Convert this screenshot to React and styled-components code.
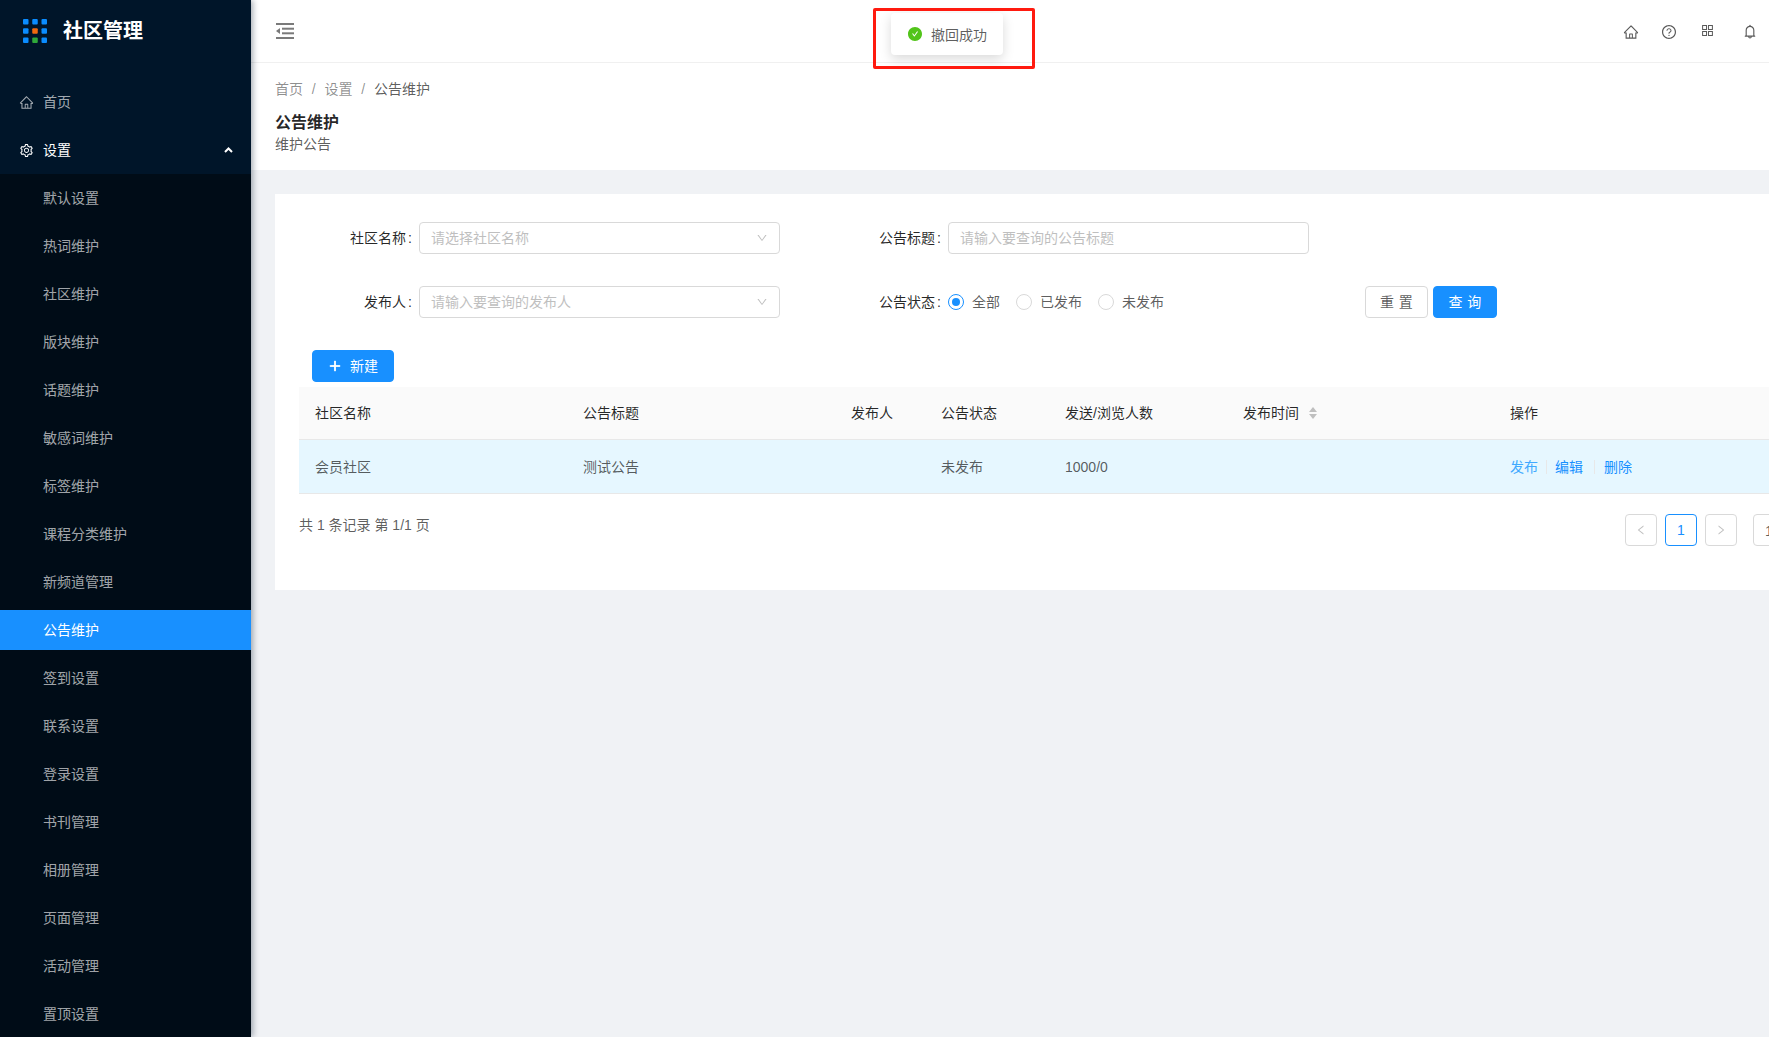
import React from 'react';
import styled, { createGlobalStyle } from 'styled-components';
import {
  AiOutlineHome,
  AiOutlineSetting,
  AiOutlineQuestionCircle,
  AiOutlineAppstore,
  AiOutlineBell,
  AiFillCheckCircle,
  AiOutlinePlus,
  AiOutlineDown,
  AiOutlineLeft,
  AiOutlineRight,
} from 'react-icons/ai';

const GlobalStyle = createGlobalStyle`
html, body {
  margin: 0;
  height: 100%;
  overflow: hidden;
  background: #f0f2f5;
  font-family: "Liberation Sans", "Noto Sans CJK SC", sans-serif;
  font-size: 14px;
  color: rgba(0, 0, 0, 0.65);
}
* {
  box-sizing: border-box;
}
`

const Layout = styled.div`
display: flex;
width: 1769px;
height: 1037px;
overflow: hidden;
position: relative;
`

const Sidebar = styled.aside`
flex: 0 0 251px;
height: 100%;
background-color: #001529;
box-shadow: 2px 0 6px rgba(0, 21, 41, 0.35);
overflow: hidden;
position: relative;
z-index: 2;
`

const Logo = styled.div`
height: 62px;
margin-bottom: 16px;
display: flex;
align-items: center;
padding-left: 23px;
`

const LogoTitle = styled.h1`
margin: 0 0 0 16px;
font-size: 20px;
line-height: 28px;
font-weight: 700;
color: #fff;
`

const Menu = styled.div`
display: flex;
flex-direction: column;
gap: 8px;
padding: 4px 0;
`

const MenuTitle = styled.div`
height: 40px;
display: flex;
align-items: center;
gap: 9px;
padding: 0 18px 0 19px;
line-height: 22px;
color: ${(props) => (props.$open ? '#fff' : 'rgba(255, 255, 255, 0.65)')};
svg {
  font-size: 15px;
}
`

const Arrow = styled.svg`
margin-left: auto;
width: 9px;
height: 6px;
`

const SubMenu = styled.div`
display: flex;
flex-direction: column;
gap: 8px;
padding: 4px 0;
background-color: #000c17;
`

const SubItem = styled.div`
height: 40px;
display: flex;
align-items: center;
padding-left: 43px;
line-height: 22px;
color: ${(props) => (props.$active ? '#fff' : 'rgba(255, 255, 255, 0.65)')};
background-color: ${(props) => (props.$active ? '#1890ff' : 'transparent')};
`

const Content = styled.div`
flex: 1;
min-width: 0;
display: flex;
flex-direction: column;
`

const TopBar = styled.header`
flex: 0 0 63px;
height: 63px;
display: flex;
align-items: center;
padding: 0 11px 0 25px;
background-color: #fff;
border-bottom: 1px solid #f0f0f0;
`

const FoldIcon = styled.svg`
width: 18px;
height: 16px;
margin-top: -1px;
`

const TopIcons = styled.div`
margin-left: auto;
display: flex;
align-items: center;
`

const TopIcon = styled.span`
width: 38px;
height: 20px;
display: flex;
align-items: center;
justify-content: center;
color: #595959;
font-size: ${(props) => props.$size || 16}px;
transform: translateY(${(props) => props.$shift || 0}px);
&:last-child {
  width: 16px;
  margin-left: 16px;
}
`

const PageHead = styled.div`
height: 107px;
padding: 15px 24px 0;
background-color: #fff;
`

const Breadcrumb = styled.div`
display: flex;
line-height: 22px;
color: rgba(0, 0, 0, 0.45);
`

const Slash = styled.span`
margin: 0 8.8px;
`

const Current = styled.span`
color: rgba(0, 0, 0, 0.65);
`

const PageTitle = styled.h2`
margin: 11px 0 0;
font-size: 16px;
line-height: 24px;
font-weight: 600;
color: rgba(0, 0, 0, 0.85);
`

const PageDesc = styled.p`
margin: -2px 0 0;
line-height: 22px;
`

const Card = styled.section`
width: 1600px;
margin: 24px 0 0 24px;
padding: 28px 24px 44px;
background-color: #fff;
`

const FormRow = styled.div`
display: flex;
align-items: center;
height: 32px;
margin: 0 0 32px -24px;
`

const Label = styled.label`
width: ${(props) => props.$width}px;
padding-right: 7px;
text-align: right;
color: rgba(0, 0, 0, 0.85);
line-height: 22px;
&::after {
  content: ':';
  margin-left: 2px;
}
`

const Field = styled.div`
width: 361px;
height: 32px;
display: flex;
align-items: center;
padding: 0 11px 2px;
border: 1px solid #d9d9d9;
border-radius: 4px;
color: #bfbfbf;
svg {
  margin: 2px 0 0 auto;
  font-size: 12px;
  color: #bfbfbf;
}
`

const RadioGroup = styled.div`
width: 361px;
display: flex;
align-items: center;
`

const RadioItem = styled.span`
display: flex;
align-items: center;
margin-right: 16px;
line-height: 22px;
`

const RadioDot = styled.span`
width: 16px;
height: 16px;
margin-right: 8px;
border-radius: 50%;
border: 1px solid ${(props) => (props.$checked ? '#1890ff' : '#d9d9d9')};
display: flex;
align-items: center;
justify-content: center;
&::after {
  content: '';
  width: 8px;
  height: 8px;
  border-radius: 50%;
  background-color: ${(props) => (props.$checked ? '#1890ff' : 'transparent')};
}
`

const Actions = styled.div`
display: flex;
gap: 5px;
margin-left: 56px;
`

const Button = styled.button`
height: 32px;
width: ${(props) => props.$width || 64}px;
display: flex;
align-items: center;
justify-content: center;
padding: 0 0 2px;
font: inherit;
border-radius: 4px;
border: 1px solid ${(props) => (props.$primary ? '#1890ff' : '#d9d9d9')};
background-color: ${(props) => (props.$primary ? '#1890ff' : '#fff')};
color: ${(props) => (props.$primary ? '#fff' : 'rgba(0, 0, 0, 0.65)')};
letter-spacing: ${(props) => (props.$spaced ? '0.34em' : '0')};
text-indent: ${(props) => (props.$spaced ? '0.34em' : '0')};
svg {
  font-size: 14px;
  margin: 2px 8px 0 0;
  stroke: currentColor;
  stroke-width: 60;
}
`

const Toolbar = styled.div`
margin: 0 0 5px 13px;
`

const Table = styled.div`
border-bottom: 1px solid #e8e8e8;
`

const TableRow = styled.div`
display: grid;
grid-template-columns: 268px 268px 90px 124px 178px 267px 1fr;
height: 53px;
align-items: center;
background-color: ${(props) => (props.$head ? '#fafafa' : '#e6f7ff')};
color: ${(props) => (props.$head ? 'rgba(0, 0, 0, 0.85)' : 'rgba(0, 0, 0, 0.65)')};
border-bottom: ${(props) => (props.$head ? '1px solid #e8e8e8' : '0')};
`

const Cell = styled.div`
padding: 0 16px;
line-height: 22px;
display: flex;
align-items: center;
`

const Sorter = styled.svg`
width: 8px;
height: 12px;
margin-left: 10px;
`

const Link = styled.a`
color: ${(props) => (props.$light ? '#40a9ff' : '#1890ff')};
`

const LinkDivider = styled.i`
width: 1px;
height: 14px;
margin: 0 ${(props) => props.$right || 8}px 0 ${(props) => props.$left || 8}px;
background-color: #e8e8e8;
`

const Footer = styled.div`
display: flex;
justify-content: space-between;
margin-top: 20px;
`

const Summary = styled.span`
line-height: 22px;
`

const Pager = styled.div`
display: flex;
gap: 8px;
`

const PageButton = styled.span`
width: 32px;
height: 32px;
display: flex;
align-items: center;
justify-content: center;
border-radius: 4px;
border: 1px solid ${(props) => (props.$active ? '#1890ff' : '#d9d9d9')};
color: ${(props) => (props.$active ? '#1890ff' : '#bfbfbf')};
font-size: ${(props) => (props.$active ? 14 : 12)}px;
`

const SizeSelect = styled.span`
width: 98px;
height: 32px;
margin-left: 8px;
display: flex;
align-items: center;
padding: 0 11px;
border: 1px solid #d9d9d9;
border-radius: 4px;
`

const Toast = styled.div`
position: absolute;
top: 13px;
left: 891px;
z-index: 5;
height: 42px;
display: flex;
align-items: center;
gap: 8px;
padding: 0 16px;
background-color: #fff;
border-radius: 4px;
box-shadow: 0 4px 12px rgba(0, 0, 0, 0.15);
svg {
  font-size: 16px;
  color: #52c41a;
}
`

const Highlight = styled.div`
position: absolute;
top: 8px;
left: 873px;
z-index: 6;
width: 162px;
height: 61px;
border: 3px solid #ff1a0f;
border-radius: 2px;
`

const settings = [
  '默认设置', '热词维护', '社区维护', '版块维护', '话题维护', '敏感词维护',
  '标签维护', '课程分类维护', '新频道管理', '公告维护', '签到设置', '联系设置',
  '登录设置', '书刊管理', '相册管理', '页面管理', '活动管理', '置顶设置',
];

const logoDots = [
  '#0a8cff', '#0a8cff', '#0a8cff',
  '#0a8cff', '#f0690f', '#0a8cff',
  '#0a8cff', '#2fa83a', '#0a8cff',
];

function App() {
  return (
    <Layout>
      <GlobalStyle />
      <Sidebar>
        <Logo>
          <svg width="24" height="24" viewBox="0 0 24 24">
            {logoDots.map((color, i) => (
              <rect key={i} x={(i % 3) * 9.25} y={Math.floor(i / 3) * 9.25} width="5.5" height="5.5" rx="1" fill={color} />
            ))}
          </svg>
          <LogoTitle>社区管理</LogoTitle>
        </Logo>
        <Menu>
          <MenuTitle><AiOutlineHome />首页</MenuTitle>
          <MenuTitle $open>
            <AiOutlineSetting />设置
            <Arrow viewBox="0 0 9 6">
              <polyline points="1,5 4.5,1.5 8,5" fill="none" stroke="#fff" strokeWidth="2" />
            </Arrow>
          </MenuTitle>
        </Menu>
        <SubMenu>
          {settings.map((name) => (
            <SubItem key={name} $active={name === '公告维护'}>{name}</SubItem>
          ))}
        </SubMenu>
      </Sidebar>
      <Content>
        <TopBar>
          <FoldIcon viewBox="0 0 18 16">
            <rect x="0" y="0" width="18" height="2" fill="#7a7a7a" />
            <rect x="6" y="4.7" width="12" height="2" fill="#7a7a7a" />
            <rect x="6" y="9.3" width="12" height="2" fill="#7a7a7a" />
            <rect x="0" y="14" width="18" height="2" fill="#7a7a7a" />
            <polygon points="0,8 4,5 4,11" fill="#7a7a7a" />
          </FoldIcon>
          <TopIcons>
            <TopIcon $shift={1}><AiOutlineHome /></TopIcon>
            <TopIcon $shift={1}><AiOutlineQuestionCircle /></TopIcon>
            <TopIcon $size={15} $shift={-1}><AiOutlineAppstore /></TopIcon>
            <TopIcon $size={17}><AiOutlineBell /></TopIcon>
          </TopIcons>
        </TopBar>
        <PageHead>
          <Breadcrumb>
            <span>首页</span><Slash>/</Slash>
            <span>设置</span><Slash>/</Slash>
            <Current>公告维护</Current>
          </Breadcrumb>
          <PageTitle>公告维护</PageTitle>
          <PageDesc>维护公告</PageDesc>
        </PageHead>
        <Card>
          <FormRow>
            <Label $width={144}>社区名称</Label>
            <Field>请选择社区名称<AiOutlineDown /></Field>
            <Label $width={168}>公告标题</Label>
            <Field>请输入要查询的公告标题</Field>
          </FormRow>
          <FormRow>
            <Label $width={144}>发布人</Label>
            <Field>请输入要查询的发布人<AiOutlineDown /></Field>
            <Label $width={168}>公告状态</Label>
            <RadioGroup>
              <RadioItem><RadioDot $checked />全部</RadioItem>
              <RadioItem><RadioDot />已发布</RadioItem>
              <RadioItem><RadioDot />未发布</RadioItem>
            </RadioGroup>
            <Actions>
              <Button $spaced $width={63}>重置</Button>
              <Button $primary $spaced>查询</Button>
            </Actions>
          </FormRow>
          <Toolbar>
            <Button $primary $width={82}><AiOutlinePlus />新建</Button>
          </Toolbar>
          <Table>
            <TableRow $head>
              <Cell>社区名称</Cell>
              <Cell>公告标题</Cell>
              <Cell>发布人</Cell>
              <Cell>公告状态</Cell>
              <Cell>发送/浏览人数</Cell>
              <Cell>
                发布时间
                <Sorter viewBox="0 0 8 12">
                  <polygon points="4,0 8,5 0,5" fill="#bfbfbf" />
                  <polygon points="0,7 8,7 4,12" fill="#bfbfbf" />
                </Sorter>
              </Cell>
              <Cell>操作</Cell>
            </TableRow>
            <TableRow>
              <Cell>会员社区</Cell>
              <Cell>测试公告</Cell>
              <Cell />
              <Cell>未发布</Cell>
              <Cell>1000/0</Cell>
              <Cell />
              <Cell>
                <Link $light>发布</Link>
                <LinkDivider />
                <Link>编辑</Link>
                <LinkDivider $left={11} $right={9} />
                <Link>删除</Link>
              </Cell>
            </TableRow>
          </Table>
          <Footer>
            <Summary>共 1 条记录 第 1/1 页</Summary>
            <Pager>
              <PageButton><AiOutlineLeft /></PageButton>
              <PageButton $active>1</PageButton>
              <PageButton><AiOutlineRight /></PageButton>
              <SizeSelect>10 条/页</SizeSelect>
            </Pager>
          </Footer>
        </Card>
      </Content>
      <Toast><AiFillCheckCircle />撤回成功</Toast>
      <Highlight />
    </Layout>
  );
}

export default App;
